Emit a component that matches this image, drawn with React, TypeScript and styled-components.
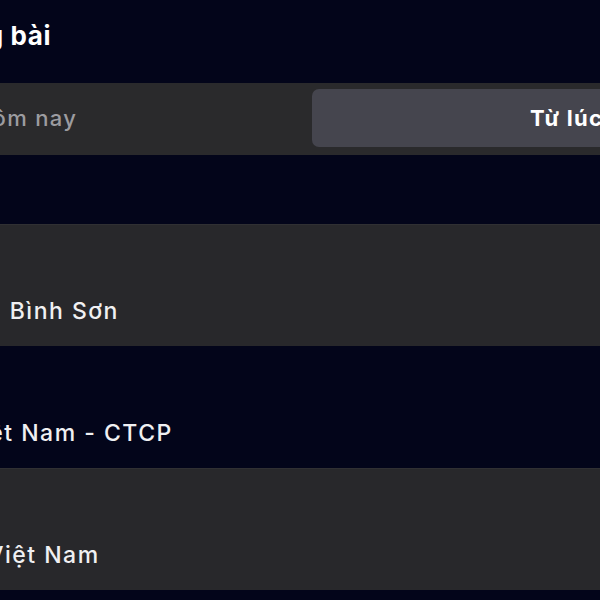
import React from 'react';
import styled, { createGlobalStyle } from 'styled-components';

const GlobalStyle = createGlobalStyle`
  html, body {
    margin: 0;
    padding: 0;
    background: #03051a;
  }
  body {
    font-family: Inter, "Noto Sans", "Liberation Sans", sans-serif;
    color: #f2f2f4;
  }
`;

const Viewport = styled.div`
  width: 600px;
  height: 600px;
  overflow: hidden;
  background: #03051a;
`;

// the page is wider than the window and scrolled sideways
const Page = styled.main`
  width: 1138px;
  margin-left: -260px;
  padding-top: 20px;
`;

const Title = styled.h1`
  margin: 0;
  padding-left: 19px;
  font-size: 26px;
  line-height: 32px;
  font-weight: 700;
  letter-spacing: 0.6px;
  color: #ffffff;
`;

const TabBar = styled.div`
  margin-top: 31px;
  display: grid;
  grid-template-columns: 1fr 1fr;
  gap: 6px;
  padding: 6px 6px 8px;
  background: #2a2a2c;
`;

const Tab = styled.button<{ $active?: boolean }>`
  height: 58px;
  border: none;
  border-radius: 7px;
  font-family: inherit;
  font-size: 22px;
  letter-spacing: 1.3px;
  font-weight: ${(p) => (p.$active ? 700 : 500)};
  color: ${(p) => (p.$active ? '#ffffff' : '#9c9ca0')};
  background: ${(p) => (p.$active ? '#45454e' : 'transparent')};
  cursor: pointer;
`;

const List = styled.ul`
  list-style: none;
  margin: 69px 0 0;
  padding: 0;
`;

const Row = styled.li<{ $striped: boolean }>`
  height: 122px;
  box-sizing: border-box;
  display: grid;
  grid-template-columns: 490px 1fr;
  align-items: end;
  padding-bottom: 21px;
  background: ${(p) => (p.$striped ? '#28282b' : 'transparent')};
  border-top: 1px solid ${(p) => (p.$striped ? '#303033' : 'transparent')};
`;

const Name = styled.span`
  font-size: 23px;
  line-height: 28px;
  font-weight: 500;
  letter-spacing: 1.5px;
  text-align: center;
  color: #f0f0f2;
`;

const Count = styled.span`
  font-size: 22px;
  line-height: 28px;
  text-align: right;
  padding-right: 24px;
  color: #c8c8cc;
`;

const companies = [
  { name: 'Lọc hóa dầu Bình Sơn', posts: 128 },
  { name: 'Tổng Cty Khí Việt Nam - CTCP', posts: 97 },
  { name: 'Hàng hải Việt Nam', posts: 85 },
  { name: 'Tập đoàn Hòa Phát', posts: 64 },
];

export default function App() {
  return (
    <Viewport>
      <GlobalStyle />
      <Page>
        <Title>Xếp hạng số lượng bài</Title>
        <TabBar>
          <Tab>Hôm nay</Tab>
          <Tab $active>Từ lúc đầu</Tab>
        </TabBar>
        <List>
          {companies.map((c, i) => (
            <Row key={c.name} $striped={i % 2 === 0}>
              <Name>{c.name}</Name>
              <Count>{c.posts} bài</Count>
            </Row>
          ))}
        </List>
      </Page>
    </Viewport>
  );
}
